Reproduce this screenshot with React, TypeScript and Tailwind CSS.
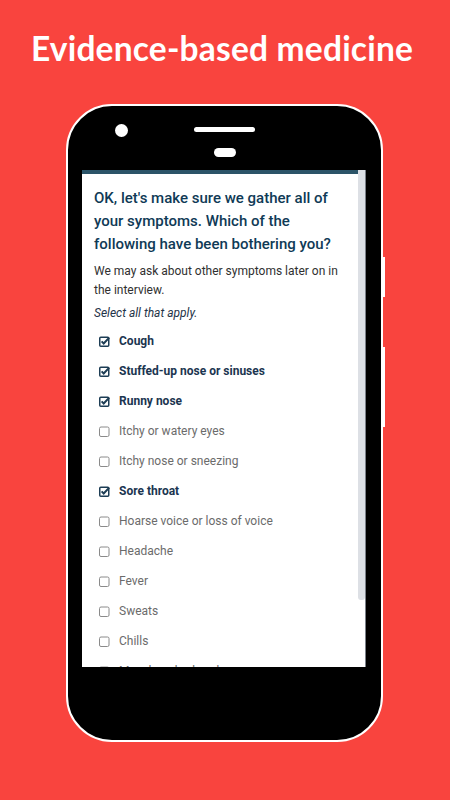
const symptoms: { label: string; checked: boolean }[] = [
  { label: "Cough", checked: true },
  { label: "Stuffed-up nose or sinuses", checked: true },
  { label: "Runny nose", checked: true },
  { label: "Itchy or watery eyes", checked: false },
  { label: "Itchy nose or sneezing", checked: false },
  { label: "Sore throat", checked: true },
  { label: "Hoarse voice or loss of voice", checked: false },
  { label: "Headache", checked: false },
  { label: "Fever", checked: false },
  { label: "Sweats", checked: false },
  { label: "Chills", checked: false },
  { label: "Muscle or body aches", checked: false },
];

function Checkbox({ checked }: { checked: boolean }) {
  if (checked) {
    return (
      <svg width="11" height="11" viewBox="0 0 11 11" className="shrink-0">
        <rect x="0.75" y="1.25" width="9" height="9" rx="1" fill="none" stroke="#1d3d55" strokeWidth="1.5" />
        <path d="M2.6 5.4 L4.7 7.5 L10.2 1.6" fill="none" stroke="#1d3d55" strokeWidth="2" />
      </svg>
    );
  }
  return (
    <svg width="11" height="11" viewBox="0 0 11 11" className="shrink-0">
      <rect x="0.5" y="1" width="9.5" height="9.5" rx="1.5" fill="none" stroke="#8a8a8a" strokeWidth="1" />
    </svg>
  );
}

export default function App() {
  return (
    <div className="w-[450px] h-[800px] bg-[#f9443e] flex flex-col items-center overflow-hidden font-['Roboto',sans-serif]">
      <h1 className="pt-[24px] mr-[6px] text-[33.5px] leading-[48px] font-bold text-white font-['Lato',sans-serif] tracking-[0.2px]">
        Evidence-based medicine
      </h1>

      <div className="relative mt-[32px] ml-[-1px] w-[317px] h-[638px] rounded-[46px] border-2 border-white bg-black flex flex-col">
        {/* side buttons */}
        <div className="absolute right-[-4px] top-[151px] w-[2px] h-[40px] bg-white" />
        <div className="absolute right-[-4px] top-[241px] w-[2px] h-[80px] bg-white" />

        <div className="relative h-[64px] shrink-0 flex flex-col items-center">
          <div className="absolute left-[47px] top-[18px] w-[13px] h-[13px] rounded-full bg-white" />
          <div className="mt-[21px] w-[61px] h-[5px] rounded-full bg-white" />
          <div className="mt-[16px] w-[22px] h-[9px] rounded-full bg-white" />
        </div>

        <div className="ml-[14px] w-[284px] h-[497px] bg-white flex overflow-hidden">
          <div className="flex-1 flex flex-col min-w-0">
            <div className="h-[4px] bg-[#2b5468] shrink-0" />
            <div className="pl-[12px] pr-[4px] pt-[13px]">
              <h2 className="text-[15px] leading-[23px] font-medium text-[#0f3a56] whitespace-nowrap">
                OK, let's make sure we gather all of
                <br />
                your symptoms. Which of the
                <br />
                following have been bothering you?
              </h2>
              <p className="mt-[6px] text-[12px] leading-[19px] text-[#303030] whitespace-nowrap">
                We may ask about other symptoms later on in
                <br />
                the interview.
              </p>
              <p className="mt-[4px] text-[12px] leading-[19px] italic text-[#1f3448]">Select all that apply.</p>
              <ul className="mt-[3px] flex flex-col">
                {symptoms.map((s) => (
                  <li key={s.label} className="h-[30px] flex items-center gap-[9px] pl-[5px]">
                    <Checkbox checked={s.checked} />
                    <span
                      className={
                        s.checked
                          ? "text-[12px] font-bold text-[#1b3550]"
                          : "text-[12px] text-[#6b6b6b]"
                      }
                    >
                      {s.label}
                    </span>
                  </li>
                ))}
              </ul>
            </div>
          </div>
          <div className="w-[8px] shrink-0 border-r border-[#7b8088] flex flex-col">
            <div className="h-[430px] bg-[#dde0e5] rounded-b-[3px]" />
          </div>
        </div>
      </div>
    </div>
  );
}
